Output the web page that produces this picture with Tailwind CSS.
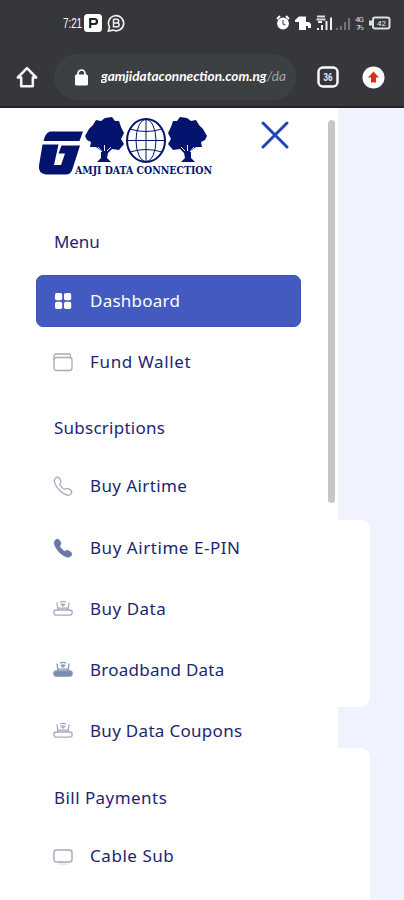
<!DOCTYPE html>
<html lang="en">
<head>
<meta charset="utf-8">
<title>Gamji Data Connection</title>
<script src="https://cdn.jsdelivr.net/npm/@tailwindcss/browser@4"></script>
</head>
<body class="w-[404px] h-[900px] overflow-hidden bg-[#f0f3ff] font-['Noto_Sans',sans-serif] text-[17px] text-[#1c2670]">
<svg class="hidden">
  <defs>
    <symbol id="phone" viewBox="0 0 20 20"><path d="M2.300 2.300c1.200-1.500 3-1.500 4 0l1.200 2c.7 1.200.3 2.200-.4 3.100-.5.7-.3 1.200.2 2l3 3.200c.8.7 1.500.9 2.200.4 1-.7 2-.9 3.100-.2l2 1.300c1.500 1 1.500 2.700.2 4-1.200 1.200-3 1.300-5 .5C7.600 16.400 3.300 11.600 1.600 6.400c-.5-1.600-.3-3.100.7-4.100Z"/></symbol>
    <symbol id="router" viewBox="0 0 20 20"><rect x=".8" y="11" width="18.400" height="5.200" rx="2.600"/><path fill="none" d="M5 11 4 3.500M15 11l1-7.500M5 9.200h10M7 3.300q3-1.800 6 0M8.300 5.400q1.700-1.200 3.400 0L10 7Z"/></symbol>
    <symbol id="tree" viewBox="0 0 40 48"><path d="M0 20 4 13 8 9l3-5 5 1 4-3 7-1 3 4 4 0 2 6 3 6-3 6 3 5-5 6-7-1-4 4-1 5 4 4H12l4-4v-7l-5-4-6 0 1-5-4-2Z"/><path d="M13 31l4 5M26 31l-4 4M19.500 29v6" fill="none" stroke="#fff" stroke-width=".9"/></symbol>
  </defs>
</svg>

<header class="h-[108px] bg-[#36373b] border-b-2 border-[#222326] text-white">
  <div class="h-[46px] pl-[63px] pr-[13px] flex items-center">
    <span class="font-['Liberation_Sans',sans-serif] text-[14px] w-[21px] leading-none"><span class="inline-block origin-left scale-x-[.7]">7:21</span></span>
    <svg class="w-[18px] h-[18px]" viewBox="0 0 18 18"><rect width="18" height="18" rx="3.500" fill="#fff"/><path d="M6.200 14V5h4.200q2.600 0 2.600 2.500T10.400 10H6.200" fill="none" stroke="#222" stroke-width="2.200"/></svg>
    <svg class="ml-[5px] w-[18px] h-[18px]" viewBox="0 0 18 18" fill="none" stroke="#eee"><path d="M1.500 17l1-4a7.600 7.600 0 1 1 3.400 3.100Z" stroke-width="1.700"/><path d="M6.500 5.300h3.200q2 0 2 1.800T9.700 9H6.500m3.200 0q2.500 0 2.500 1.900T9.700 12.700H6.500V5.300" stroke-width="1.500"/></svg>
    <svg class="ml-auto w-[118px] h-[20px]" viewBox="273 13 118 20">
      <circle cx="283" cy="23.500" r="5.900" fill="#fff"/><path d="M277 19l3-3M289 19l-3-3" stroke="#fff" stroke-width="2"/><path d="M283 20v4l2.500 1" fill="none" stroke="#555" stroke-width="1.200"/>
      <path d="M295 20l4-3.500h7V22h3l2 2v4h-3v-2h-2v4h-7v-8h-4Z" fill="#fff"/>
      <path d="M317 16.500h8M316.500 19.500h9" stroke="#ddd" stroke-width="2"/><path d="M318 22h4M318 28v2M322 25v5M326.500 21v9M331 17.500v12.500" stroke="#eee" stroke-width="2"/>
      <path d="M337 28v2M341 26v4M345 22v8M349 18v12" stroke="#737477" stroke-width="2"/>
      <text x="355" y="22" font-size="8" fill="#ddd" font-family="Roboto" textLength="9">4G</text><text x="356" y="30" font-size="8" fill="#ddd" font-family="Roboto" textLength="8">7½</text>
      <rect x="373" y="17.500" width="16.500" height="11" rx="2" fill="none" stroke="#ddd" stroke-width="2"/><path d="M369 20.500h3v5h-3Z" fill="#ddd"/><text x="377" y="26" font-size="8" fill="#eee" font-family="Roboto">42</text>
    </svg>
  </div>
  <div class="h-[62px] flex items-center pl-[16px]">
    <svg class="w-[22px] h-[22px]" viewBox="0 0 22 22" fill="none" stroke="#f5f5f5" stroke-width="2.500" stroke-linejoin="round"><path d="M1.800 11.500 11 2.200l9.200 9.300h-3.400v8.700H5.200v-8.700Z"/></svg>
    <div class="ml-[16px] w-[242px] h-[46px] rounded-full bg-[#3c4043] flex items-center pl-[21px]">
      <svg class="w-[13px] h-[17px]" viewBox="0 0 13 17"><rect y="5.500" width="13" height="11" rx="1.500" fill="#fff"/><path d="M3 7V4.500a3.500 3.500 0 0 1 7 0V7" fill="none" stroke="#fff" stroke-width="1.700"/></svg>
      <svg class="ml-[13px] w-[188px] h-[26px]" viewBox="0 0 188 26" font-family="Lato, sans-serif" font-style="italic" font-size="14"><text x="0" y="17" font-weight="700" fill="#fff" textLength="185" lengthAdjust="spacingAndGlyphs">gamjidataconnection.com.ng<tspan fill="#a4a6a8" font-weight="400">/da</tspan></text></svg>
    </div>
    <svg class="ml-[21px] w-[22px] h-[22px]" viewBox="0 0 22 22"><rect x="1.500" y="1.500" width="19" height="19" rx="4.500" fill="none" stroke="#fff" stroke-width="2.400"/><text x="6.500" y="15" font-size="10.500" font-weight="700" font-family="Roboto" textLength="9" lengthAdjust="spacingAndGlyphs" fill="#eee">36</text></svg>
    <svg class="ml-[23px] w-[23px] h-[23px]" viewBox="0 0 23 23"><circle cx="11.500" cy="11.500" r="11" fill="#fff"/><path d="M11.500 5.500l5.500 6h-3v5h-5v-5H6Z" fill="#e4291f"/></svg>
  </div>
</header>

<main class="h-[792px] flex">
  <aside class="w-[338px] bg-white flex shrink-0">
    <div class="w-[301px] pl-[36px]">
      <div class="h-[107px] flex items-start">
        <svg class="mt-[8px] w-[182px] h-[64px] shrink-0" viewBox="36 116 182 64" fill="#04146e">
          <path d="M50 131.500h33l-3.500 9.500H43.500q1.500-8 6.500-9.500ZM42.500 144.500h16L54 165h7l4-11.500h-6.500l3-8H80L72.500 169q-1.500 5.500-6.500 5.500H46q-8-1-7-9Z"/>
          <use href="#tree" x="85" y="116" width="40" height="48"/>
          <g transform="translate(292 0) scale(-1 1)"><use href="#tree" x="85" y="116" width="40" height="48"/></g>
          <g fill="none" stroke="#04146e"><ellipse cx="146" cy="140.500" rx="19" ry="21.500" stroke-width="2"/><ellipse cx="146" cy="140.500" rx="10" ry="21"/><path d="M146 119.500v42M127 140.500h38M130 129q16 5 32 0M130 152q16-5 32 0"/></g>
          <text x="75" y="174" font-family="DejaVu Serif Condensed, DejaVu Serif" font-weight="700" font-size="11.500" textLength="137" lengthAdjust="spacingAndGlyphs">AMJI DATA CONNECTION</text>
        </svg>
        <svg class="ml-[42px] mt-[12px] w-[30px] h-[30px] shrink-0" viewBox="0 0 30 30" stroke="#2344b4" stroke-width="3" stroke-linecap="round"><path d="M3 3l24 24M27 3 3 27"/></svg>
      </div>
      <nav class="leading-[24px] whitespace-nowrap">
        <h2 class="h-[60px] pt-[15px] pl-[18px] tracking-[-.1px]">Menu</h2>
        <div class="flex flex-col gap-[9.300px]">
          <a class="h-[52px] rounded-[7px] bg-[#435bc0] border border-[#3850b8] text-white flex items-center gap-[18px] pl-[17px] tracking-[.25px]">
            <svg class="w-[18px] h-[18px]" viewBox="0 0 18 18" fill="#fff"><rect x="1" y="1" width="7.200" height="7.200" rx="1.800"/><rect x="10" y="1" width="7.200" height="7.200" rx="1.800"/><rect x="1" y="9.800" width="7.200" height="7.200" rx="1.800"/><rect x="10" y="9.800" width="7.200" height="7.200" rx="1.800"/></svg><span>Dashboard</span></a>
          <a class="h-[52px] flex items-center gap-[17px] pl-[17px] tracking-[.65px]">
            <svg class="w-[20px] h-[20px]" viewBox="0 0 20 20" fill="none" stroke="#a9abb8" stroke-width="1.300"><rect x="1" y="5.500" width="18" height="13" rx="2.500"/><path d="M1 8V4.500Q1 2 3.500 2H16q1.500 0 1.500 1.500v2"/></svg><span>Fund Wallet</span></a>
        </div>
        <h2 class="h-[72px] pt-[28px] pl-[18px] tracking-[.25px]">Subscriptions</h2>
        <div class="flex flex-col gap-[9.300px]">
          <a class="h-[52px] flex items-center gap-[17px] pl-[17px] tracking-[.4px]"><svg class="w-[20px] h-[20px]" fill="none" stroke="#a0a5ba" stroke-width="1.200"><use href="#phone"/></svg><span>Buy Airtime</span></a>
          <a class="h-[52px] flex items-center gap-[17px] pl-[17px] tracking-[.55px]"><svg class="w-[20px] h-[20px]" fill="#6679a8" stroke="#6679a8" stroke-width=".8"><use href="#phone"/></svg><span>Buy Airtime E-PIN</span></a>
          <a class="h-[52px] flex items-center gap-[17px] pl-[17px] tracking-[.5px]"><svg class="w-[20px] h-[20px]" fill="none" stroke="#a5abbd" stroke-width="1.300"><use href="#router"/></svg><span>Buy Data</span></a>
          <a class="h-[52px] flex items-center gap-[17px] pl-[17px] tracking-[.25px]"><svg class="w-[20px] h-[20px]" fill="#788bb3" stroke="#8795b5" stroke-width="1.300"><use href="#router"/></svg><span>Broadband Data</span></a>
          <a class="h-[52px] flex items-center gap-[17px] pl-[17px] tracking-[.3px]"><svg class="w-[20px] h-[20px]" fill="none" stroke="#a5abbd" stroke-width="1.300"><use href="#router"/></svg><span>Buy Data Coupons</span></a>
        </div>
        <h2 class="h-[73px] pt-[29px] pl-[18px] tracking-[.45px]">Bill Payments</h2>
        <a class="h-[52px] flex items-center gap-[17px] pl-[17px] tracking-[.55px]"><svg class="w-[20px] h-[20px]" viewBox="0 0 20 20" fill="none" stroke="#a3abbd" stroke-width="1.400"><rect x="1" y="4" width="18" height="12" rx="2.500"/><path d="M5 18h10" stroke="#e3e6ee"/></svg><span>Cable Sub</span></a>
      </nav>
    </div>
    <div class="ml-[27px] mt-[12px] w-[7px] h-[383px] rounded-full bg-[#c5c6c6]"></div>
  </aside>
  <section class="w-[32px] pt-[412px] flex flex-col gap-[41px]">
    <div class="h-[187px] shrink-0 rounded-r-[9px] bg-white"></div>
    <div class="h-[160px] shrink-0 rounded-tr-[9px] bg-white"></div>
  </section>
</main>
</body>
</html>
